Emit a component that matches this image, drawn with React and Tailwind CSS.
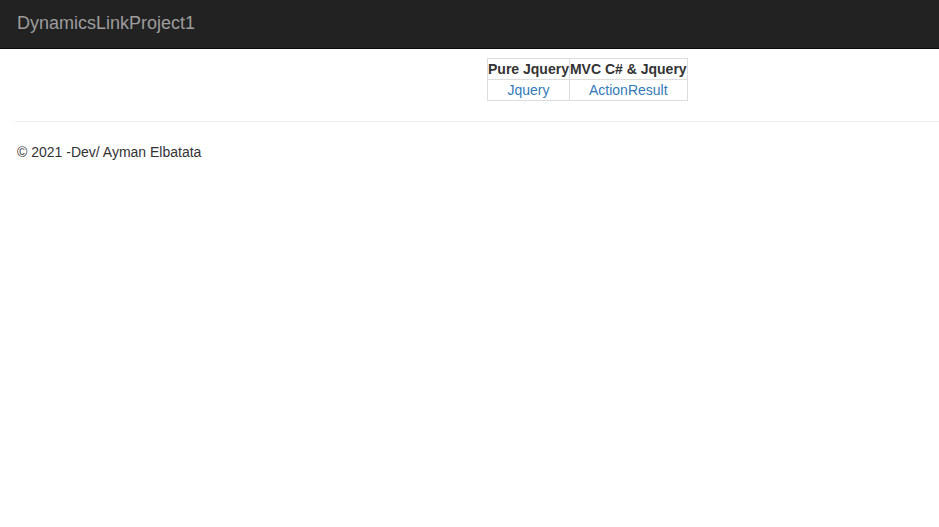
import React from "react";

const App = () => {
  return (
    <div className="min-h-screen bg-white text-[14px] leading-[20px] text-[#333] font-['Liberation_Sans',Arial,sans-serif]">
      {/* Navbar */}
      <div className="h-[49px] bg-[#222] border-b border-[#080808]">
        <div className="px-[15px]">
          <a className="block pt-[13px] pl-[2px] text-[18px] leading-[20px] text-[#9d9d9d]">
            DynamicsLinkProject1
          </a>
        </div>
      </div>

      <div className="pl-[15px]">
        <div className="mt-[9px] ml-[472px]">
          <table className="border-collapse">
            <thead>
              <tr>
                <th className="border border-[#ddd] p-0 font-bold">Pure Jquery</th>
                <th className="border border-[#ddd] p-0 font-bold">MVC C# &amp; Jquery</th>
              </tr>
            </thead>
            <tbody>
              <tr>
                <td className="border border-[#ddd] p-0 text-center">
                  <a className="text-[#337ab7]">Jquery</a>
                </td>
                <td className="border border-[#ddd] p-0 text-center">
                  <a className="text-[#337ab7]">ActionResult</a>
                </td>
              </tr>
            </tbody>
          </table>
        </div>

        <hr className="mt-[20px] mb-[20px] border-0 border-t border-[#eee]" />

        <footer>
          <p className="pl-[2px]">© 2021 -Dev/ Ayman Elbatata</p>
        </footer>
      </div>
    </div>
  );
};

export default App;
